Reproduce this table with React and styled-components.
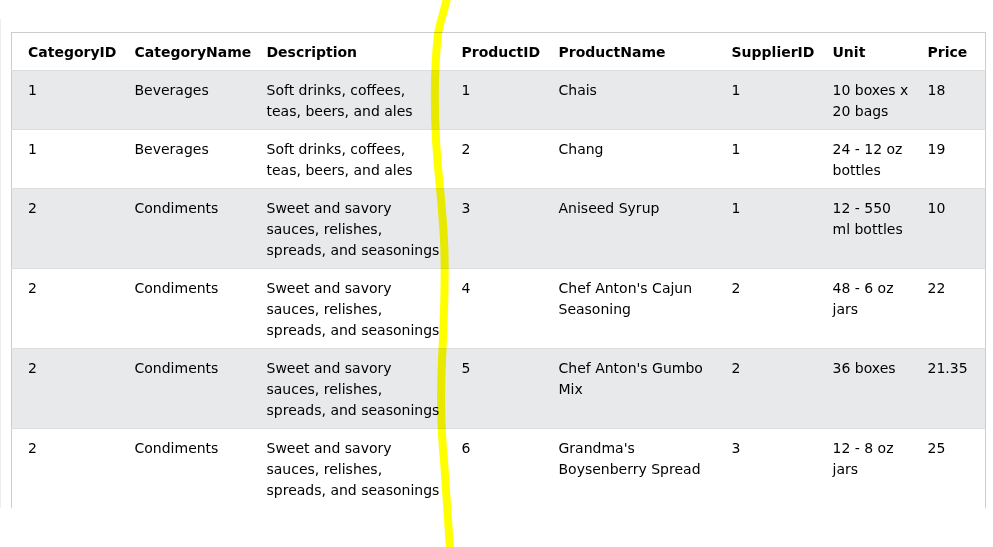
import React from "react";
import styled, { createGlobalStyle } from "styled-components";

const GlobalStyle = createGlobalStyle`
  html, body {
    margin: 0;
    padding: 0;
    background: #fff;
  }
  body {
    font-family: Verdana, "DejaVu Sans", sans-serif;
    font-size: 14px;
    color: #000;
  }
`;

const Page = styled.div`
  position: relative;
  width: 993px;
  height: 547px;
  overflow: hidden;
`;

const Frame = styled.div`
  margin-top: 19px;
  height: 489px;
  padding: 13px 0 0 10px;
  box-sizing: border-box;
  border-left: 1px solid #eeeeee;
  overflow: hidden;
`;

const Table = styled.table`
  border-collapse: collapse;
  border-spacing: 0;
  table-layout: fixed;
  width: 974px;
  border: 1px solid #cccccc;
`;

const HeadCell = styled.th`
  text-align: left;
  font-weight: bold;
  line-height: 21px;
  padding: 9px 8px 7px;
  white-space: nowrap;
  &:first-child {
    padding-left: 16px;
  }
`;

const Row = styled.tr`
  background: ${(p) => (p.$shaded ? "#e7e9eb" : "#ffffff")};
  border-bottom: 1px solid #dddddd;
`;

const HeadRow = styled.tr`
  border-bottom: 1px solid #dddddd;
`;

const Cell = styled.td`
  vertical-align: top;
  line-height: 21px;
  padding: 9px ${(p) => (p.$tight ? "13px" : "8px")} 7px 8px;
  &:first-child {
    padding-left: 16px;
  }
`;

const Tear = styled.svg`
  position: absolute;
  left: 0;
  top: 0;
  pointer-events: none;
  mix-blend-mode: multiply;
`;

const columns = [
  { name: "CategoryID", width: 115 },
  { name: "CategoryName", width: 132 },
  { name: "Description", width: 195 },
  { name: "ProductID", width: 97 },
  { name: "ProductName", width: 173 },
  { name: "SupplierID", width: 101 },
  { name: "Unit", width: 95 },
  { name: "Price", width: 66 },
];

const soft = "Soft drinks, coffees, teas, beers, and ales";
const sweet = "Sweet and savory sauces, relishes, spreads, and seasonings";

const rows = [
  ["1", "Beverages", soft, "1", "Chais", "1", "10 boxes x 20 bags", "18"],
  ["1", "Beverages", soft, "2", "Chang", "1", "24 - 12 oz bottles", "19"],
  ["2", "Condiments", sweet, "3", "Aniseed Syrup", "1", "12 - 550 ml bottles", "10"],
  ["2", "Condiments", sweet, "4", "Chef Anton's Cajun Seasoning", "2", "48 - 6 oz jars", "22"],
  ["2", "Condiments", sweet, "5", "Chef Anton's Gumbo Mix", "2", "36 boxes", "21.35"],
  ["2", "Condiments", sweet, "6", "Grandma's Boysenberry Spread", "3", "12 - 8 oz jars", "25"],
];

const App = () => {
  return (
    <Page>
      <GlobalStyle />
      <Frame>
        <Table>
          <colgroup>
            {columns.map((c) => (
              <col key={c.name} style={{ width: c.width }} />
            ))}
          </colgroup>
          <thead>
            <HeadRow>
              {columns.map((c) => (
                <HeadCell key={c.name}>{c.name}</HeadCell>
              ))}
            </HeadRow>
          </thead>
          <tbody>
            {rows.map((r, i) => (
              <Row key={i} $shaded={i % 2 === 0}>
                {r.map((v, j) => (
                  <Cell key={j} $tight={j === 2}>
                    {v}
                  </Cell>
                ))}
              </Row>
            ))}
          </tbody>
        </Table>
      </Frame>
      <Tear width="993" height="547" viewBox="0 0 993 547">
        <path
          d="M447 -2 C444 12 440 22 438 34 C435 60 434 100 436 140 C438 175 442 200 444 240 C446 280 444 320 442 360 C440 400 441 430 444 460 C446 490 448 520 450 549"
          fill="none"
          stroke="#ffff00"
          strokeWidth="8"
          strokeLinecap="butt"
        />
      </Tear>
    </Page>
  );
};

export default App;
